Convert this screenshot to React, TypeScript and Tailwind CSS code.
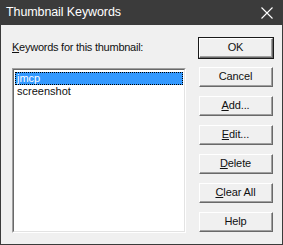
import React from "react";

const buttons = [
  { label: "OK", key: "" },
  { label: "Cancel", key: "" },
  { label: "Add...", key: "A" },
  { label: "Edit...", key: "E" },
  { label: "Delete", key: "D" },
  { label: "Clear All", key: "C" },
  { label: "Help", key: "" },
];

function Mnemonic({ text, k }: { text: string; k: string }) {
  if (!k) return <>{text}</>;
  return (
    <>
      <span className="underline underline-offset-[1px]">{text[0]}</span>
      {text.slice(1)}
    </>
  );
}

function DlgButton({ label, k, isDefault }: { label: string; k: string; isDefault?: boolean }) {
  return (
    <div className={isDefault ? "border border-[#1a1a1a]" : "border border-transparent"}>
      <div className="border-t border-l border-white border-r border-b border-r-[#696969] border-b-[#696969]">
        <div className="h-[18px] flex items-center justify-center bg-[#f0f0f0] border-r border-b border-[#a0a0a0] text-[11px] text-[#111] tracking-[-0.1px]">
          <Mnemonic text={label} k={k} />
        </div>
      </div>
    </div>
  );
}

export default function App() {
  return (
    <div className="w-[283px] h-[245px] bg-[#3b3b3b] flex flex-col px-px pb-px font-['Liberation_Sans',Arial,sans-serif]">
      <div className="h-[25px] flex items-center justify-between pl-[5px] pr-[9px] shrink-0">
        <span className="text-white text-[12.5px] tracking-[-0.1px] font-['Liberation_Sans',Arial,sans-serif]">Thumbnail Keywords</span>
        <svg width="12" height="12" viewBox="0 0 12 12" className="mt-[1px]">
          <path d="M0.5 0.5 L11.5 11.5 M11.5 0.5 L0.5 11.5" stroke="#ffffff" strokeWidth="1.1" />
        </svg>
      </div>
      <div className="flex-1 bg-[#f0f0f0] flex pl-[11px] pt-[11px]">
        <div className="w-[174px] flex flex-col">
          <div className="h-[13px] mt-[5px] text-[11px] leading-[13px] text-[#111] tracking-[-0.25px]">
            <span className="underline underline-offset-[1px]">K</span>eywords for this thumbnail:
          </div>
          <div className="mt-[14px] h-[165px] border-t border-l border-[#a0a0a0] border-r border-b border-r-white border-b-white">
            <div className="h-full bg-white border-t border-l border-[#696969] border-r border-b border-r-[#e3e3e3] border-b-[#e3e3e3] pt-[2px] px-[1px] text-[11px] leading-[13px]">
              <div className="bg-[#3399ff] text-white pl-[2px] outline outline-1 outline-dotted outline-[#000] -outline-offset-1">jmcp</div>
              <div className="text-[#111] pl-[2px]">screenshot</div>
            </div>
          </div>
        </div>
        <div className="ml-[12px] w-[76px] flex flex-col gap-[7px] pt-[1px]">
          {buttons.map((b, i) => (
            <DlgButton key={b.label} label={b.label} k={b.key} isDefault={i === 0} />
          ))}
        </div>
      </div>
    </div>
  );
}
